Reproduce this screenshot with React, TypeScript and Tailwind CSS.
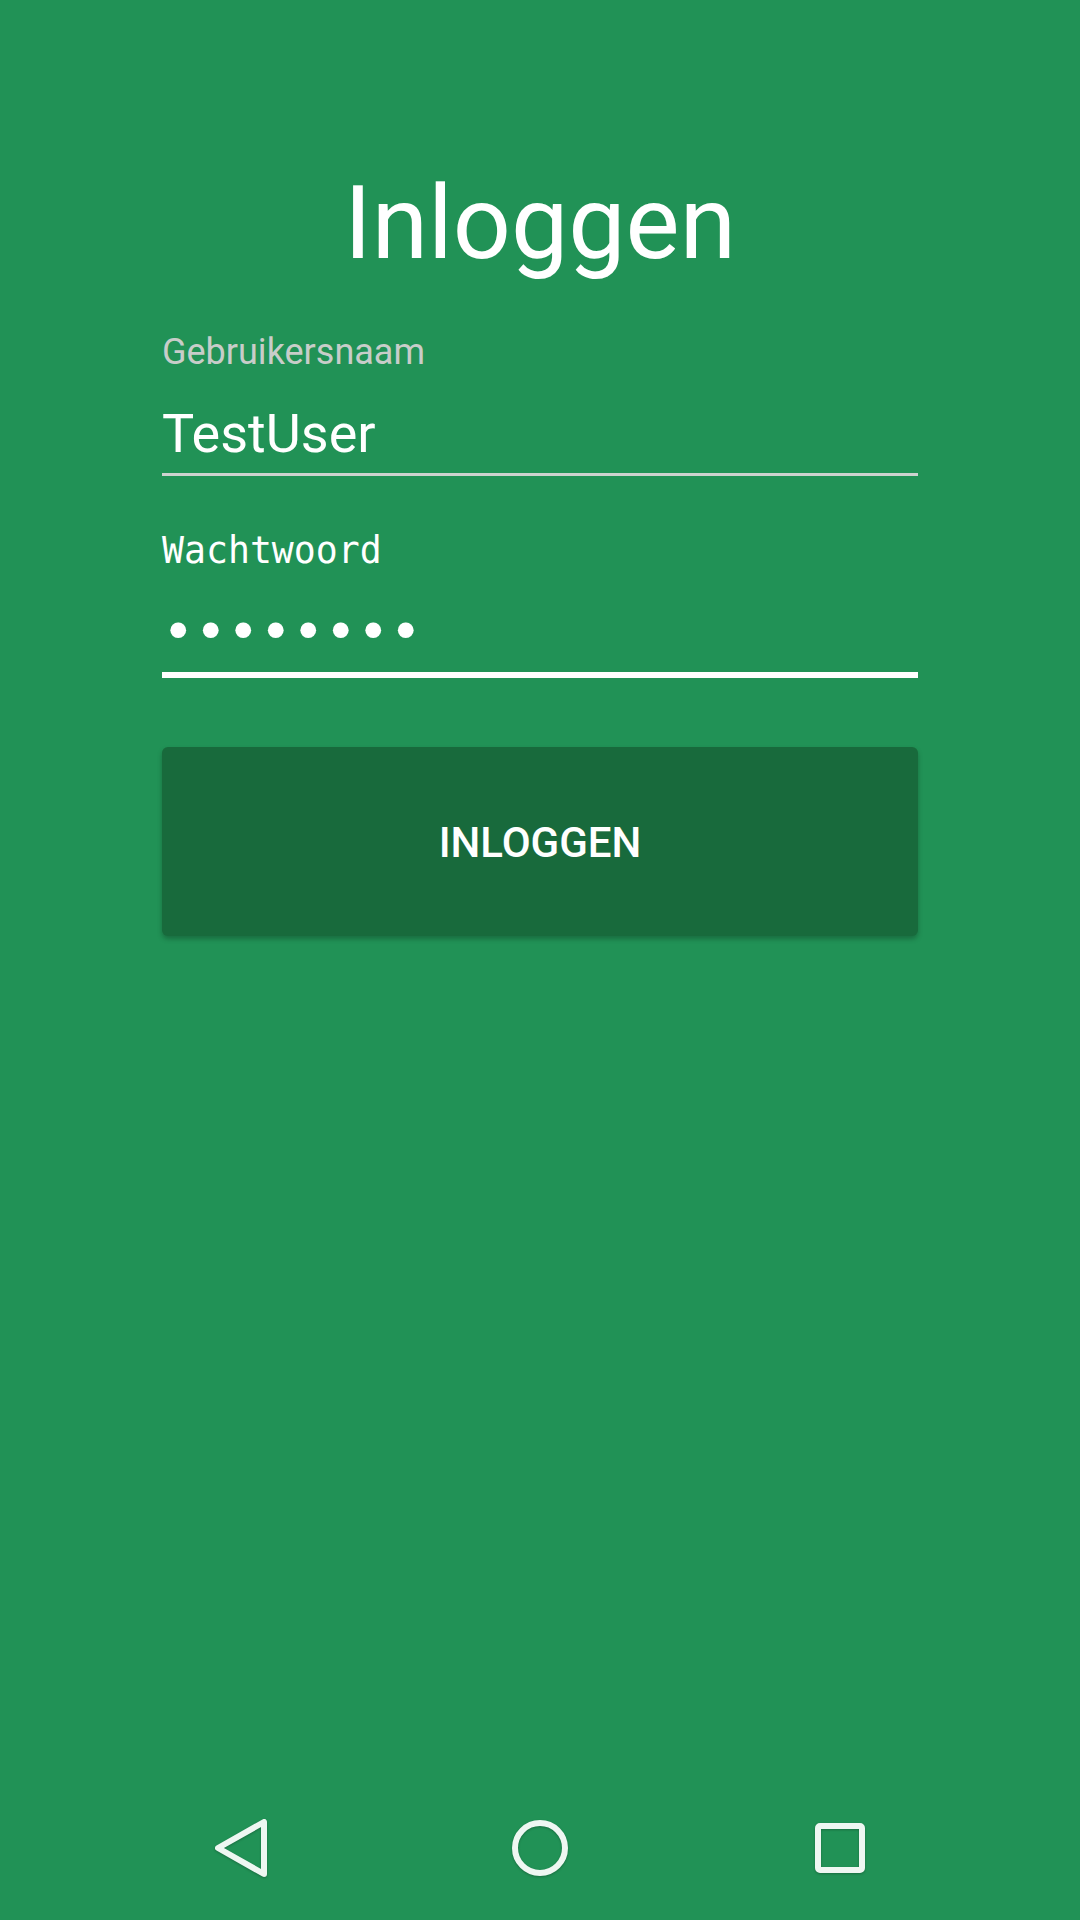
import React from 'react';

const NavBar: React.FC = () => (
  <div className="mt-auto h-[144px] flex items-center justify-center">
    <div className="w-[300px] flex items-center justify-center">
      <svg width="60" height="64" viewBox="0 0 60 64" className="drop-shadow-[0_1px_1px_rgba(0,0,0,0.25)]">
        <path d="M8 32 L54 6 L54 58 Z" fill="none" stroke="#eef7f2" strokeWidth="6" strokeLinejoin="round" />
      </svg>
    </div>
    <div className="w-[300px] flex items-center justify-center">
      <svg width="60" height="60" viewBox="0 0 60 60" className="drop-shadow-[0_1px_1px_rgba(0,0,0,0.25)]">
        <circle cx="30" cy="30" r="25" fill="none" stroke="#eef7f2" strokeWidth="6" />
      </svg>
    </div>
    <div className="w-[300px] flex items-center justify-center">
      <svg width="52" height="52" viewBox="0 0 52 52" className="drop-shadow-[0_1px_1px_rgba(0,0,0,0.25)]">
        <rect x="4" y="4" width="44" height="44" rx="2" fill="none" stroke="#eef7f2" strokeWidth="6" />
      </svg>
    </div>
  </div>
);

export default function App() {
  return (
    <div className="w-[1080px] h-[1920px] bg-[#219256] flex flex-col font-['Roboto',sans-serif] text-white">
      <div className="px-[162px] flex flex-col">
        <h1 className="mt-[163px] text-center text-[102px] leading-[120px] font-normal">Inloggen</h1>

        {/* Gebruikersnaam */}
        <label className="mt-[48px] text-[36px] leading-[42px] text-[#c8cdc9]">Gebruikersnaam</label>
        <div className="mt-[29px] text-[54px] leading-[63px]">TestUser</div>
        <div className="mt-[8px] h-[3px] bg-[#cdd3cf]" />

        {/* Wachtwoord */}
        <label className="mt-[54px] text-[36.5px] leading-[42px] font-['DejaVu_Sans_Mono',monospace]">Wachtwoord</label>
        <div className="mt-[28px] text-[54px] leading-[63px] font-['DejaVu_Sans_Mono',monospace]">••••••••</div>
        <div className="mt-[9px] h-[6px] bg-white" />

        <button className="mt-[69px] h-[189px] w-full rounded-[6px] bg-[#186a3c] shadow-[0_3px_5px_rgba(0,0,0,0.25)] pt-[2px] text-[42px] font-medium text-white">
          INLOGGEN
        </button>
      </div>

      <NavBar />
    </div>
  );
}
